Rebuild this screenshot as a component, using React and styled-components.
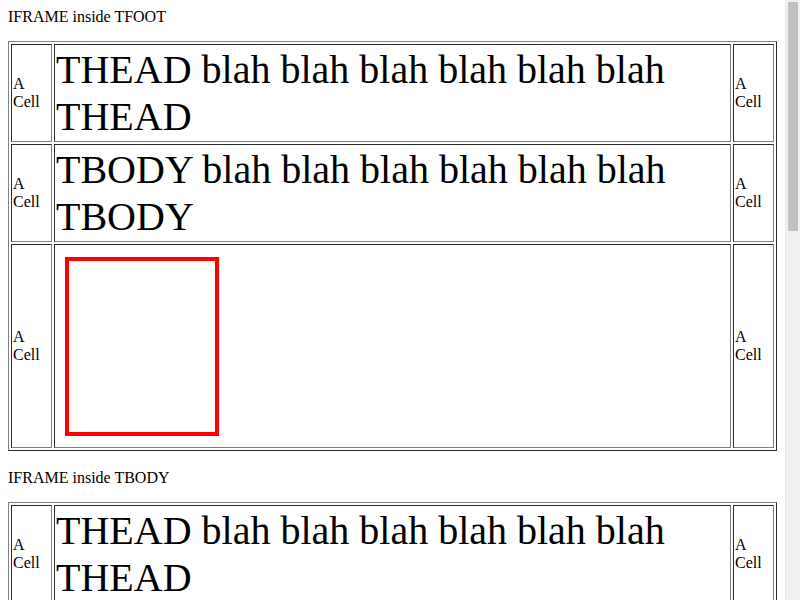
import React from "react";
import styled, { createGlobalStyle } from "styled-components";

const GlobalStyle = createGlobalStyle`
  body {
    margin: 8px 23px 8px 8px;
    font-family: "Liberation Serif", "Times New Roman", serif;
    font-size: 16px;
    color: #000;
    background: #fff;
  }
`;

// the page scrolls in the reference: a classic 15px scrollbar on the right
const ScrollTrack = styled.div`
  position: fixed;
  top: 0;
  right: 0;
  width: 15px;
  height: 100%;
  background: #f1f1f1;
  border-left: 1px solid #e8e8e8;
  box-sizing: border-box;
`;

const ScrollThumb = styled.div`
  margin: 2px 0 0 2px;
  width: 10px;
  height: 229px;
  background: #c1c1c1;
`;

const Section = styled.section`
  margin-bottom: 18px;
`;

const Label = styled.div`
  margin-bottom: 15px;
`;

const Table = styled.table`
  width: 100%;
  border: 1px outset grey;
  border-spacing: 2px;
`;

const Cell = styled.td`
  border: 1px inset grey;
  padding: 1px;
  vertical-align: middle;
  width: ${(p) => (p.$side ? "37px" : "auto")};
  font-size: ${(p) => (p.$big ? "40px" : "16px")};
`;

const Frame = styled.div`
  width: 146px;
  height: 171px;
  border: 4px solid red;
  margin: 11px 0 10px 9px;
`;

function Row({ children, big }) {
  return (
    <tr>
      <Cell $side>A Cell</Cell>
      <Cell $big={big}>{children}</Cell>
      <Cell $side>A Cell</Cell>
    </tr>
  );
}

const blah = "blah blah blah blah blah blah";

function TextRow({ name }) {
  return (
    <Row big>
      {name} {blah} {name}
    </Row>
  );
}

function FrameRow() {
  return (
    <Row>
      <Frame />
    </Row>
  );
}

export default function App() {
  return (
    <>
      <GlobalStyle />
      <Section>
        <Label>IFRAME inside TFOOT</Label>
        <Table>
          <thead>
            <TextRow name="THEAD" />
          </thead>
          <tfoot>
            <FrameRow />
          </tfoot>
          <tbody>
            <TextRow name="TBODY" />
          </tbody>
        </Table>
      </Section>
      <Section>
        <Label>IFRAME inside TBODY</Label>
        <Table>
          <thead>
            <TextRow name="THEAD" />
          </thead>
          <tfoot>
            <TextRow name="TFOOT" />
          </tfoot>
          <tbody>
            <FrameRow />
          </tbody>
        </Table>
      </Section>
      <Section>
        <Label>IFRAME inside THEAD</Label>
        <Table>
          <thead>
            <FrameRow />
          </thead>
          <tfoot>
            <TextRow name="TFOOT" />
          </tfoot>
          <tbody>
            <TextRow name="TBODY" />
          </tbody>
        </Table>
      </Section>
      <ScrollTrack>
        <ScrollThumb />
      </ScrollTrack>
    </>
  );
}
